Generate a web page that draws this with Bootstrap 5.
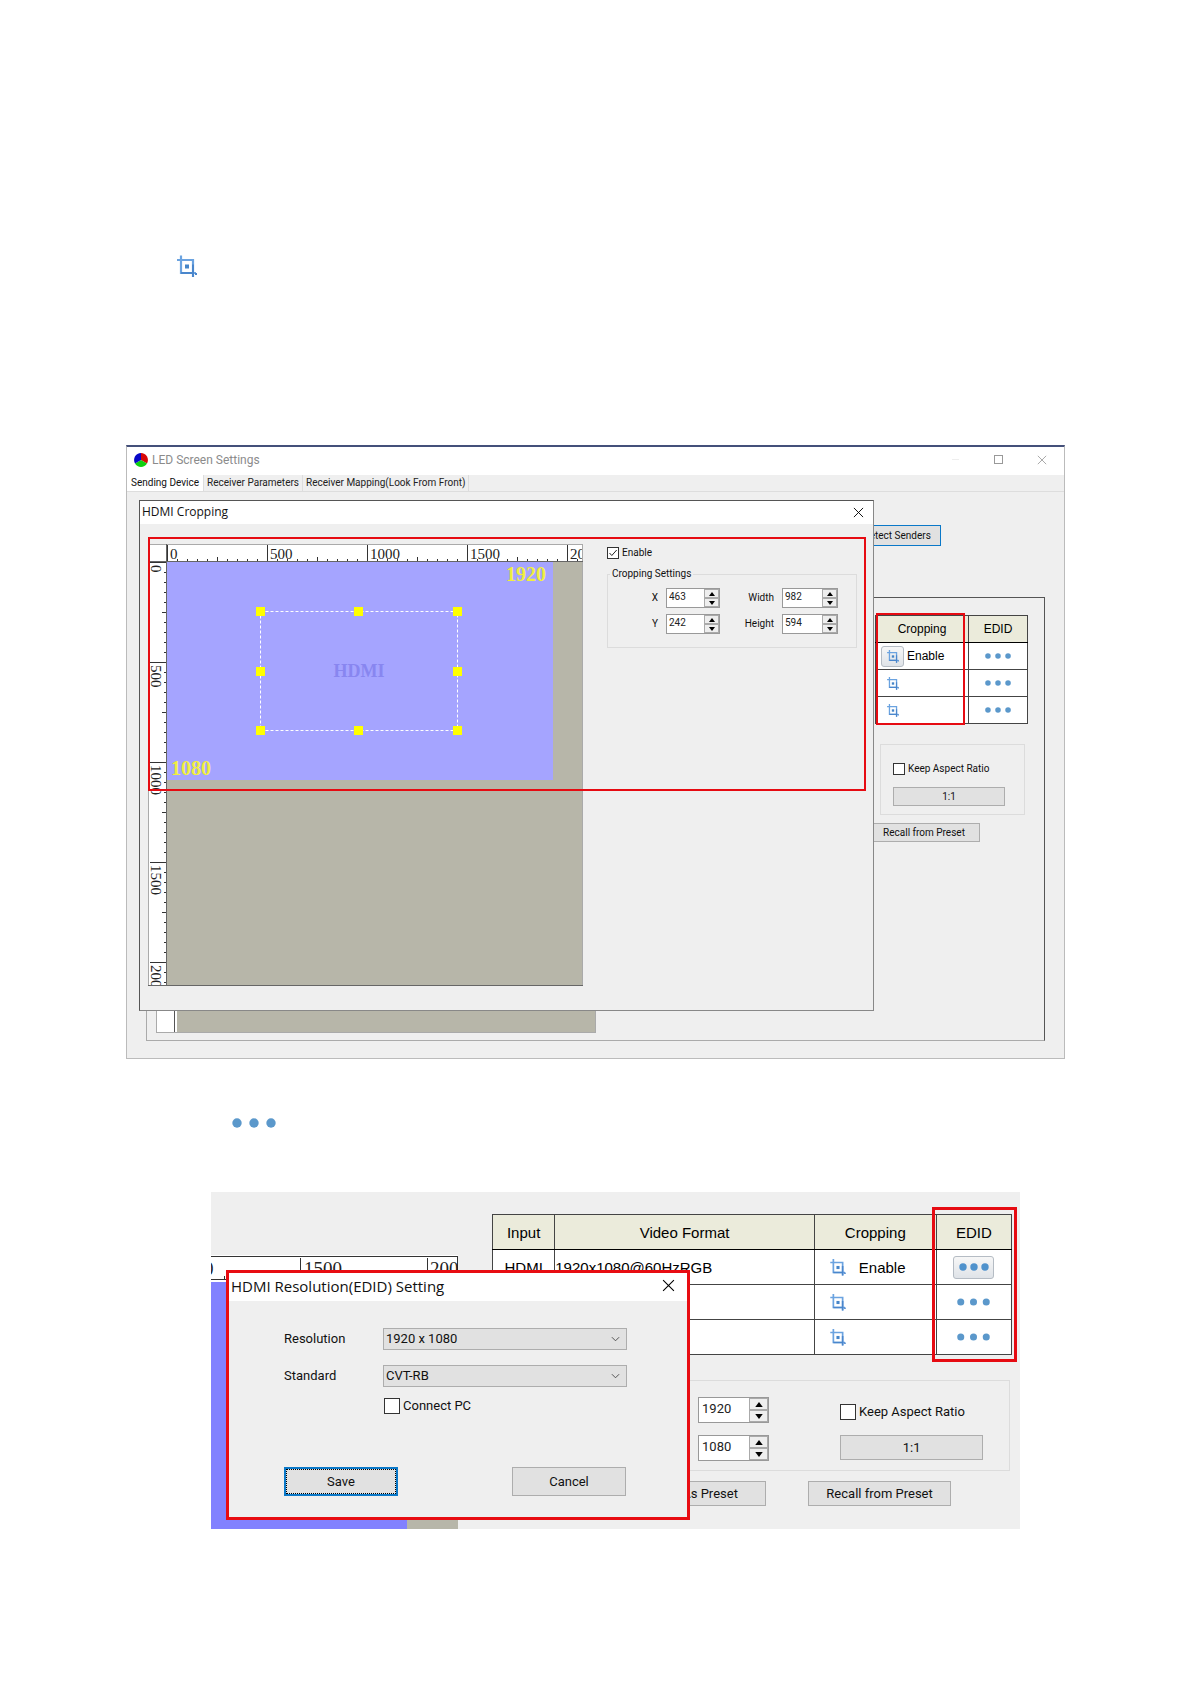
<!DOCTYPE html>
<html lang="en">
<head>
<meta charset="utf-8">
<meta name="viewport" content="width=device-width, initial-scale=1">
<title>LED Screen Settings</title>
<link href="https://cdn.jsdelivr.net/npm/bootstrap@5.3.0/dist/css/bootstrap.min.css" rel="stylesheet">
<style>
:root{--face:#efefef;--tan:#b7b6a9;--ui:Roboto,"Noto Sans",sans-serif;--cap:"Open Sans","Noto Sans",sans-serif}
body{background:#fff;color:#111;font-family:var(--ui);font-size:10px;line-height:14px}
.sheet{max-width:939px;padding-top:255px}
.note-icon{margin-left:51px;height:24px}
.note-dots{margin-left:106px;height:12px;margin-top:59px}
svg{display:block}
.win{margin-top:166px;background:var(--face);border:1px solid #bbb;border-top:2px solid #44507a;height:614px}
.win-title{background:#fff;height:28px;padding:0 14px 3px 7px;font-size:12px;color:#8b8b8b}
.win-title .ctl{width:13px;height:13px;margin-left:30px;padding:0;border:0;background:none;color:#999}
.tabs{height:17px;border-bottom:1px solid #ddd;padding:0;gap:0}
.tabs .nav-link{padding:0 3px;color:#222;line-height:16px;border-radius:0;border-right:1px solid #ddd}
.tabs .nav-link.active{background:#fff;color:#111;padding:0 4px}
.b{border:1px solid #adadad;background:#e1e1e1;color:#111;padding:0;text-align:center;border-radius:0}
.b-focus{border:2px solid #0a78c8}
.detect{width:88px;height:21px;border:1px solid #0a78c8;margin:33px 123px 0 0}
.pane{margin:51px 19px 0 19px;height:444px;border:1px solid #aaa;border-top-color:#555;border-right-color:#555}
.strip{width:440px;height:400px;margin:0 0 7px 9px;border:1px solid #aaa;background:linear-gradient(90deg,#fff 17px,#555 17px 18px,#fff 18px 20px,var(--tan) 20px)}
.side{width:160px;margin-right:16px;padding-top:17px}
.io{--bs-table-bg:transparent;margin:0;font-family:"Liberation Sans",sans-serif;color:#000;background:#fff;border:1px solid #111;table-layout:fixed}
.io th,.io td{padding:0;border:1px solid #444;vertical-align:middle;font-weight:400;line-height:1}
.io th{background:#ebebdb;text-align:center;border-bottom-color:#000}
.io-s{width:153px;font-size:12px}
.io-s tr{height:27px}
.io-l{width:100%;font-size:15px}
.io-l tr{height:35px}
.ib{border:1px solid transparent;background:none;padding:0;display:inline-flex;align-items:center;justify-content:center;border-radius:3px}
.ib.on{border-color:#b5bcc4;background:linear-gradient(#f7f7f7,#dfe3e8)}
.io-s .ib{width:23px;height:21px;margin:0 3px 0 5px}
.io-s .ib.dots-b{width:36px;margin:0 auto;display:flex}
.io-l .ib.crop-b{width:26px;height:22px;margin:0 8px 0 10px}
.io-l .ib.dots-b{width:41px;height:23px;margin:0 auto;display:flex}
.box{border:1px solid #dcdcdc}
.ck{appearance:none;background:#fff;border:1px solid #333;margin:0 3px 0 0;flex:none}
.ck-s{width:12px;height:12px}
.ck-l{width:16px;height:16px}
.ck:checked{background:#fff url("data:image/svg+xml,%3Csvg xmlns='http://www.w3.org/2000/svg' viewBox='0 0 10 10'%3E%3Cpath d='M1.5 5l2.3 2.5L8.7 2' fill='none' stroke='%23222'/%3E%3C/svg%3E")}
.side .box{width:145px;height:71px;margin:20px 0 0 12px;padding:17px 0 0 12px}
.side .one{width:112px;height:19px;margin-top:11px}
.side .recall{width:112px;height:19px;margin-top:8px}
.dlg{position:absolute;background:var(--face)}
.dlg-a{left:12px;top:53px;width:735px;border:1px solid #888;border-color:#555 #888 #888 #555}
.dlg-a .cap{background:#fff;height:23px;font-family:var(--cap);font-size:12px;padding:0 9px 1px 2px}
.dlg-a .inner{padding:20px 16px 24px 8px;gap:24px}
.x{border:0;background:none;padding:0}
.mark-red{position:absolute;border:2px solid #e60b12;pointer-events:none}
.mark-crop{left:8px;top:36px;right:7px;height:254px}
.mark-col{left:749px;top:166px;width:89px;height:112px}
.settings{padding-top:2px}
.settings fieldset{margin-top:7px;padding:7px 0 11px;height:81px;display:grid;grid-template-columns:50px 54px 46px 56px;column-gap:8px;row-gap:6px;align-content:start}
.settings legend{float:none;width:auto;margin:0 0 0 2px;padding:0 2px;font-size:10px;line-height:14px}
.settings label.t{text-align:right;font-size:10px;line-height:20px}
.spin{display:flex;border:1px solid #999;background:#fff}
.spin input{border:0;padding:0 0 3px 2px;min-width:0;flex:1;background:#fff;color:#222}
.spin .ar{display:flex;flex-direction:column;width:15px;background:#eee}
.spin .ar button{flex:1;border:1px solid #aaa;background:#eee;padding:0;display:flex;align-items:center;justify-content:center;min-height:0}
.spin-s{height:20px}
.spin-s input{font-size:10px}
.spin-l{height:26px;width:71px}
.spin-l input{font-size:13px;padding-left:3px}
.spin-l .ar{width:19px}
.shot{margin:62px 45px 0 85px;height:337px;background:var(--face);font-size:13px;line-height:18px;overflow:hidden}
.shot-left{width:247px;padding-top:63px;flex:none}
.shot-right{margin-left:34px;padding:22px 8px 0 0}
.shot .res{margin:25px 2px 0 0;height:91px;padding:16px 26px 0 0}
.shot .spins{gap:12px;margin-right:71px}
.shot .opts{padding-top:6px}
.shot .one{width:143px;height:25px;margin-top:14px}
.shot .presets{gap:42px;margin:10px 61px 0 0}
.shot .pre{width:143px;height:25px}
.mark-edid{right:3px;top:15px;width:85px;height:155px;border-width:3px}
.dlg-b{left:15px;top:78px;width:464px;height:250px;border:3px solid #e80c12}
.dlg-b .cap{background:#fff;height:28px;font-family:var(--cap);font-size:15px;padding:0 12px 3px 2px}
.form-b{padding:27px 0 0 55px}
.form-b .r{margin-bottom:15px}
.form-b .r label{width:99px}
.form-b .tick{margin:10px 0 0 100px}
.pick{width:244px;height:22px;border:1px solid #adadad;border-radius:0;background:#e1e1e1 url("data:image/svg+xml,%3Csvg xmlns='http://www.w3.org/2000/svg' viewBox='0 0 10 6'%3E%3Cpath d='M1 1l4 4 4-4' fill='none' stroke='%23444'/%3E%3C/svg%3E") no-repeat right 6px center/9px 6px;appearance:none;padding:0 2px;font-size:13px;line-height:18px;color:#111}
.acts{margin-top:52px;gap:114px}
.acts .b{width:114px;height:29px}
.acts .b-focus{outline:1px dotted #000;outline-offset:-3px}
.ruler-text{font-family:"Liberation Serif",serif;fill:#222}
</style>
</head>
<body>
<svg width="0" height="0" class="position-absolute" aria-hidden="true">
  <symbol id="crop" viewBox="0 0 20 22"><path d="M0 4.5h16v13M4 0v17.500h15M16 17v4.500" fill="none" stroke="#6ba3e0" stroke-width="2.200"/><path d="M4 17.500h12M16 9v12.500M19 17.500v2" fill="none" stroke="#4a86cc" stroke-width="2"/><rect x="8" y="9" width="4" height="4" fill="#4585c8"/></symbol>
  <symbol id="dots" viewBox="0 0 44 10"><g fill="#5b98cb"><circle cx="5" cy="5" r="4.700"/><circle cx="22" cy="5" r="4.700"/><circle cx="39" cy="5" r="4.700"/></g></symbol>
  <symbol id="cross" viewBox="0 0 12 12"><path d="M1 1l10 10M11 1L1 11" fill="none" stroke="currentColor"/></symbol>
  <symbol id="up" viewBox="0 0 6 4"><path d="M0 4l3-4 3 4z"/></symbol>
  <symbol id="down" viewBox="0 0 6 4"><path d="M0 0l3 4 3-4z"/></symbol>
</svg>

<main class="sheet mx-auto">
  <div class="note-icon"><svg width="20" height="23"><use href="#crop"/></svg></div>

  <section class="win position-relative">
    <header class="win-title d-flex align-items-center">
      <svg width="14" height="14" viewBox="0 0 14 14" class="me-1"><path d="M7 7V0a7 7 0 0 1 6 10.500z" fill="#d80808"/><path d="M7 7l6 3.500a7 7 0 0 1-12 0z" fill="#10d010"/><path d="M7 7l-6 3.500A7 7 0 0 1 7 0z" fill="#0808c8"/></svg>
      <span>LED Screen Settings</span>
      <button class="ctl ms-auto" aria-label="Minimize"><svg width="9" height="9"><path d="M1 4.500h7" stroke="#eee"/></svg></button>
      <button class="ctl" aria-label="Maximize"><svg width="10" height="10"><rect x=".5" y=".5" width="8" height="8" fill="none" stroke="#999"/></svg></button>
      <button class="ctl" aria-label="Close"><svg width="10" height="10"><use href="#cross"/></svg></button>
    </header>
    <nav class="nav tabs">
      <a class="nav-link active" href="#">Sending Device</a>
      <a class="nav-link" href="#">Receiver Parameters</a>
      <a class="nav-link" href="#">Receiver Mapping(Look From Front)</a>
    </nav>
    <div class="d-flex justify-content-end"><button class="b detect">Detect Senders</button></div>
    <div class="pane d-flex justify-content-between">
      <div class="strip align-self-end"></div>
      <div class="side">
        <table class="table io io-s ms-auto">
          <colgroup><col style="width:93px"><col></colgroup>
          <thead><tr><th>Cropping</th><th>EDID</th></tr></thead>
          <tbody>
            <tr><td><span class="d-flex align-items-center"><button class="ib on" aria-label="Crop HDMI"><svg width="12" height="13"><use href="#crop"/></svg></button>Enable</span></td><td><button class="ib dots-b" aria-label="EDID 1"><svg width="26" height="6"><use href="#dots"/></svg></button></td></tr>
            <tr><td><span class="d-flex"><button class="ib" aria-label="Crop 2"><svg width="12" height="13"><use href="#crop"/></svg></button></span></td><td><button class="ib dots-b" aria-label="EDID 2"><svg width="26" height="6"><use href="#dots"/></svg></button></td></tr>
            <tr><td><span class="d-flex"><button class="ib" aria-label="Crop 3"><svg width="12" height="13"><use href="#crop"/></svg></button></span></td><td><button class="ib dots-b" aria-label="EDID 3"><svg width="26" height="6"><use href="#dots"/></svg></button></td></tr>
          </tbody>
        </table>
        <div class="box">
          <div class="d-flex align-items-center"><input class="ck ck-s" type="checkbox" id="k1"><label for="k1">Keep Aspect Ratio</label></div>
          <button class="b one">1:1</button>
        </div>
        <button class="b recall">Recall from Preset</button>
      </div>
    </div>
    <div class="mark-red mark-col"></div>

    <div class="dlg dlg-a" role="dialog" aria-labelledby="ta">
      <div class="cap d-flex align-items-center justify-content-between"><span id="ta">HDMI Cropping</span><button class="x" aria-label="Close"><svg width="11" height="11"><use href="#cross"/></svg></button></div>
      <div class="inner d-flex">
        <svg id="stage" class="flex-shrink-0" width="435" height="442" viewBox="0 0 435 442">
          <rect width="435" height="442" fill="#fff"/>
          <rect x="19" y="18" width="416" height="424" fill="#b7b6a9"/>
          <rect x="19" y="18" width="386" height="218" fill="#a5a4ff"/>
          <g id="ticks" class="ruler-text" font-size="15" stroke="none"></g>
          <path d="M0 .5h435M.5 0v442M434.500 0v442" stroke="#aaa" fill="none"/>
          <path d="M0 17.500h435M18.500 0v442M0 441.500h435" stroke="#666" fill="none"/>
          <g font-family="Liberation Serif, serif" font-weight="bold">
            <text x="398" y="37" font-size="20" text-anchor="end" fill="#f0ee40">1920</text>
            <text x="23" y="231" font-size="20" fill="#f0ee40">1080</text>
            <text x="211" y="133" font-size="18" text-anchor="middle" fill="#8886f0">HDMI</text>
          </g>
          <rect x="112.500" y="67.500" width="197" height="119" fill="none" stroke="#fff" stroke-dasharray="3 2"/>
          <g fill="#ff0">
            <path d="M108 63h9v9h-9zM206 63h9v9h-9zM305 63h9v9h-9zM108 123h9v9h-9zM305 123h9v9h-9zM108 182h9v9h-9zM206 182h9v9h-9zM305 182h9v9h-9z"/>
          </g>
        </svg>
        <div class="settings flex-grow-1">
          <div class="d-flex align-items-center"><input class="ck ck-s" type="checkbox" id="en" checked><label for="en">Enable</label></div>
          <fieldset class="box">
            <legend>Cropping Settings</legend>
            <label class="t" for="cx">X</label><div class="spin spin-s"><input id="cx" value="463"><div class="ar"><button aria-label="X up"><svg width="6" height="4"><use href="#up"/></svg></button><button aria-label="X down"><svg width="6" height="4"><use href="#down"/></svg></button></div></div>
            <label class="t" for="cw">Width</label><div class="spin spin-s"><input id="cw" value="982"><div class="ar"><button aria-label="Width up"><svg width="6" height="4"><use href="#up"/></svg></button><button aria-label="Width down"><svg width="6" height="4"><use href="#down"/></svg></button></div></div>
            <label class="t" for="cy">Y</label><div class="spin spin-s"><input id="cy" value="242"><div class="ar"><button aria-label="Y up"><svg width="6" height="4"><use href="#up"/></svg></button><button aria-label="Y down"><svg width="6" height="4"><use href="#down"/></svg></button></div></div>
            <label class="t" for="ch">Height</label><div class="spin spin-s"><input id="ch" value="594"><div class="ar"><button aria-label="Height up"><svg width="6" height="4"><use href="#up"/></svg></button><button aria-label="Height down"><svg width="6" height="4"><use href="#down"/></svg></button></div></div>
          </fieldset>
        </div>
      </div>
      <div class="mark-red mark-crop"></div>
    </div>
  </section>

  <div class="note-dots"><svg width="44" height="10"><use href="#dots"/></svg></div>

  <section class="shot position-relative">
    <div class="d-flex">
      <div class="shot-left">
        <svg width="247" height="274" viewBox="0 0 247 274">
          <rect width="247" height="27" fill="#fff"/>
          <rect y="27" width="196" height="247" fill="#8281ff"/>
          <rect x="196" y="27" width="51" height="247" fill="#b7b6a9"/>
          <path d="M0 1.500h247M246.500 1v25M0 24.500h247M89.500 3v22M216.500 3v22M13.500 21v4" stroke="#333" fill="none"/>
          <g class="ruler-text" font-size="19"><text x="-7" y="20">0</text><text x="93" y="20">1500</text><text x="219" y="20">200</text></g>
        </svg>
      </div>
      <div class="shot-right flex-grow-1">
        <table class="table io io-l">
          <colgroup><col style="width:12%"><col style="width:50%"><col style="width:23.500%"><col></colgroup>
          <thead><tr><th>Input</th><th>Video Format</th><th>Cropping</th><th>EDID</th></tr></thead>
          <tbody>
            <tr><td class="text-center">HDMI</td><td>1920x1080@60HzRGB</td><td><span class="d-flex align-items-center"><button class="ib crop-b" aria-label="Crop input 1"><svg width="16" height="17"><use href="#crop"/></svg></button>Enable</span></td><td><button class="ib dots-b on" aria-label="EDID input 1"><svg width="30" height="8" viewBox="0 0 30 8"><g fill="#4f92cc"><circle cx="4" cy="4" r="3.700"/><circle cx="15" cy="4" r="3.700"/><circle cx="26" cy="4" r="3.700"/></g></svg></button></td></tr>
            <tr><td></td><td></td><td><span class="d-flex"><button class="ib crop-b" aria-label="Crop input 2"><svg width="16" height="17"><use href="#crop"/></svg></button></span></td><td><button class="ib dots-b" aria-label="EDID input 2"><svg width="33" height="8"><use href="#dots"/></svg></button></td></tr>
            <tr><td></td><td></td><td><span class="d-flex"><button class="ib crop-b" aria-label="Crop input 3"><svg width="16" height="17"><use href="#crop"/></svg></button></span></td><td><button class="ib dots-b" aria-label="EDID input 3"><svg width="33" height="8"><use href="#dots"/></svg></button></td></tr>
          </tbody>
        </table>
        <div class="box res d-flex justify-content-end">
          <div class="spins d-flex flex-column">
            <div class="spin spin-l"><input aria-label="Horizontal" value="1920"><div class="ar"><button aria-label="Horizontal up"><svg width="8" height="5"><use href="#up"/></svg></button><button aria-label="Horizontal down"><svg width="8" height="5"><use href="#down"/></svg></button></div></div>
            <div class="spin spin-l"><input aria-label="Vertical" value="1080"><div class="ar"><button aria-label="Vertical up"><svg width="8" height="5"><use href="#up"/></svg></button><button aria-label="Vertical down"><svg width="8" height="5"><use href="#down"/></svg></button></div></div>
          </div>
          <div class="opts">
            <div class="d-flex align-items-center"><input class="ck ck-l" type="checkbox" id="k2"><label for="k2">Keep Aspect Ratio</label></div>
            <button class="b one">1:1</button>
          </div>
        </div>
        <div class="presets d-flex justify-content-end">
          <button class="b pre">Save As Preset</button>
          <button class="b pre">Recall from Preset</button>
        </div>
      </div>
    </div>
    <div class="mark-red mark-edid"></div>

    <div class="dlg dlg-b" role="dialog" aria-labelledby="tb">
      <div class="cap d-flex align-items-center justify-content-between"><span id="tb">HDMI Resolution(EDID) Setting</span><button class="x" aria-label="Close"><svg width="13" height="13"><use href="#cross"/></svg></button></div>
      <form class="form-b">
        <div class="r d-flex align-items-center"><label for="rs">Resolution</label><select id="rs" class="pick"><option>1920 x 1080</option></select></div>
        <div class="r d-flex align-items-center mb-0"><label for="st">Standard</label><select id="st" class="pick"><option>CVT-RB</option></select></div>
        <div class="tick d-flex align-items-center"><input class="ck ck-l" type="checkbox" id="pc"><label for="pc">Connect PC</label></div>
        <div class="acts d-flex"><button type="button" class="b b-focus">Save</button><button type="button" class="b">Cancel</button></div>
      </form>
    </div>
  </section>
</main>

<script>
// Ruler graduations: one tick every 50 units (10px), a label every 500 units
(function(){
  var out='';
  for(var i=0;i<=42;i++){
    var len=i%10===0?17:i%5===0?5:3, p=19+i*10, q=18+i*10;
    if(p<434) out+='<path d="M'+(p+.5)+' '+(18-len)+'v'+len+'" stroke="#333"/>';
    if(q<441) out+='<path d="M'+(19-len)+' '+(q+.5)+'h'+len+'" stroke="#333"/>';
    if(i%10===0){
      out+='<text x="'+(p+3)+'" y="15">'+i*50+'</text>';
      out+='<text transform="translate(3 '+(q+3)+') rotate(90)">'+i*50+'</text>';
    }
  }
  document.getElementById('ticks').innerHTML=out;
})();
</script>
<script src="https://cdn.jsdelivr.net/npm/bootstrap@5.3.0/dist/js/bootstrap.bundle.min.js"></script>
</body>
</html>
